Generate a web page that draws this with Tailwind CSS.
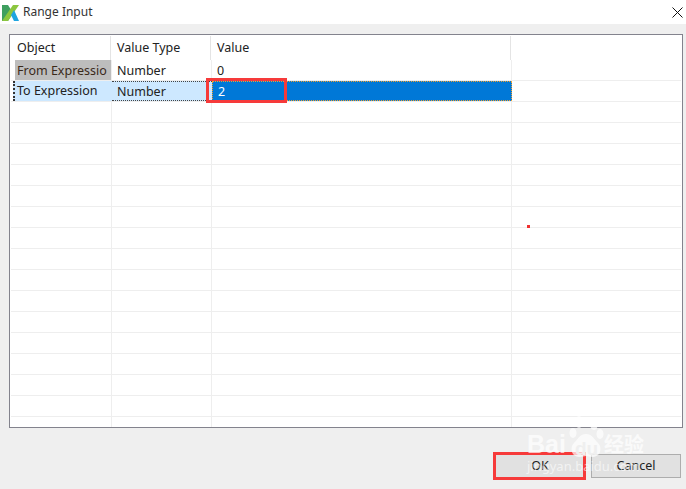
<!DOCTYPE html>
<html lang="en">
<head>
    <meta charset="UTF-8">
    <title>Range Input</title>
    <script src="https://cdn.jsdelivr.net/npm/@tailwindcss/browser@4"></script>
</head>
<body class="relative w-[686px] h-[489px] overflow-hidden bg-[#efefef] font-['Noto_Sans','Open_Sans',sans-serif] text-[12.5px] text-[#222]">
    <!-- title bar -->
    <div class="h-6 bg-white flex items-center">
        <svg class="ml-[2px] w-[17px] h-[17px]" viewBox="0 0 17 17">
            <path d="M0 1h6l5 8-5 8H0z" fill="#3f9f5f"/>
            <path d="M11 1h6L6 17H0z" fill="#8cc63f"/>
            <path d="M9 11l3-5 5 11h-5z" fill="#1fa5e0"/>
        </svg>
        <span class="ml-[4px] text-[12px] leading-none text-[#333]">Range Input</span>
        <svg class="ml-auto mr-[3px] w-[11px] h-[11px]" viewBox="0 0 11 11">
            <path d="M.5.5l10 10M10.5.5l-10 10" stroke="#111" stroke-width="1" fill="none"/>
        </svg>
    </div>

    <!-- table -->
    <div class="mt-[10px] ml-[9px] w-[674px] h-[394px] border border-[#83838d] p-[1px] bg-white overflow-hidden">
        <div class="flex h-[24px] leading-[24px]">
            <div class="w-[100px] pl-[6px] border-r border-[#e4e4e4]">Object</div>
            <div class="w-[100px] pl-[6px] border-r border-[#e4e4e4]">Value Type</div>
            <div class="w-[300px] pl-[6px] border-r border-[#e4e4e4]">Value</div>
        </div>
        <div class="flex h-[21px] border-b border-[#eee] leading-[21px]">
            <div class="w-[101px] pl-[4px] border-r border-[#eee]">
                <div class="h-[20px] pl-[2px] bg-[#bdbdbd] overflow-hidden whitespace-nowrap text-[#3a2a1a]">From Expressio</div>
            </div>
            <div class="w-[100px] pl-[5px] border-r border-[#eee] leading-[22px]">Number</div>
            <div class="w-[300px] pl-[5px] border-r border-[#eee] leading-[22px]">0</div>
        </div>
        <div class="flex h-[21px] border-b border-[#eee] leading-[19px]">
            <div class="w-[101px] pl-[1px]">
                <div class="h-[20px] pl-[2px] ml-[1px] bg-[#cde8ff] border-l-2 border-dotted border-[#333]">To Expression</div>
            </div>
            <div class="w-[100px] h-[20px] pl-[5px] bg-[#cde8ff] border-y border-dotted border-[#444]">Number</div>
            <div class="w-[300px] h-[20px] pl-[5px] bg-[#0078d7] border border-dotted border-[#f0a030] text-white">2</div>
        </div>
        <div id="rows"></div>
    </div>

    <!-- buttons -->
    <div class="flex justify-end gap-[6px] mt-[26px] mr-[5px]">
        <button class="w-[90px] h-[24px] bg-[#e1e1e1] border border-[#adadad]">OK</button>
        <button class="w-[90px] h-[24px] bg-[#e1e1e1] border border-[#adadad]">Cancel</button>
    </div>

    <!-- annotations drawn on the screenshot -->
    <div class="absolute left-[206px] top-[78px] w-[81px] h-[25px] border-[3px] border-[#f63a3a]"></div>
    <div class="absolute left-[493px] top-[452px] w-[93px] h-[28px] border-[3px] border-[#f63a3a]"></div>
    <div class="absolute left-[527px] top-[225px] w-[3px] h-[3px] bg-[#f03030]"></div>

    <!-- watermark -->
    <svg class="absolute left-[565px] top-[414px] w-[42px] h-[46px]" viewBox="0 0 42 46" fill="#fff" fill-opacity=".7">
        <ellipse cx="8" cy="19" rx="3.5" ry="5"/><ellipse cx="14" cy="8" rx="4" ry="6"/><ellipse cx="29" cy="10" rx="4" ry="6"/><ellipse cx="35" cy="20" rx="3.5" ry="5"/>
        <path d="M21 20c6 0 8 5 12 9 5 5 2 14-5 14-3 0-5-1-7-1s-4 1-7 1c-7 0-10-9-5-14 4-4 6-9 12-9z"/>
    </svg>
    <div class="absolute left-[527px] top-[430px] text-[25px] leading-[28px] font-bold text-white/70 font-['Liberation_Sans',sans-serif]">Bai</div>
    <div class="absolute left-[575px] top-[438px] text-[19px] leading-[22px] font-bold text-[#efefef] font-['Liberation_Sans',sans-serif]">du</div>
    <div class="absolute left-[604px] top-[433px] text-[20px] leading-[22px] font-bold text-white/70 font-['Noto_Sans_CJK_SC',sans-serif]">经验</div>
    <div class="absolute left-[527px] top-[459px] text-[13px] leading-[14px] text-white/60">jingyan.baidu.com</div>

    <script>
        const rows = document.getElementById('rows');
        for (let i = 0; i < 16; i++) {
            const row = document.createElement('div');
            row.className = 'flex h-[21px] border-b border-[#eee]';
            for (const w of ['w-[101px]', 'w-[100px]', 'w-[300px]']) {
                const cell = document.createElement('div');
                cell.className = w + ' border-r border-[#eee]';
                row.appendChild(cell);
            }
            rows.appendChild(row);
        }
    </script>
</body>
</html>
